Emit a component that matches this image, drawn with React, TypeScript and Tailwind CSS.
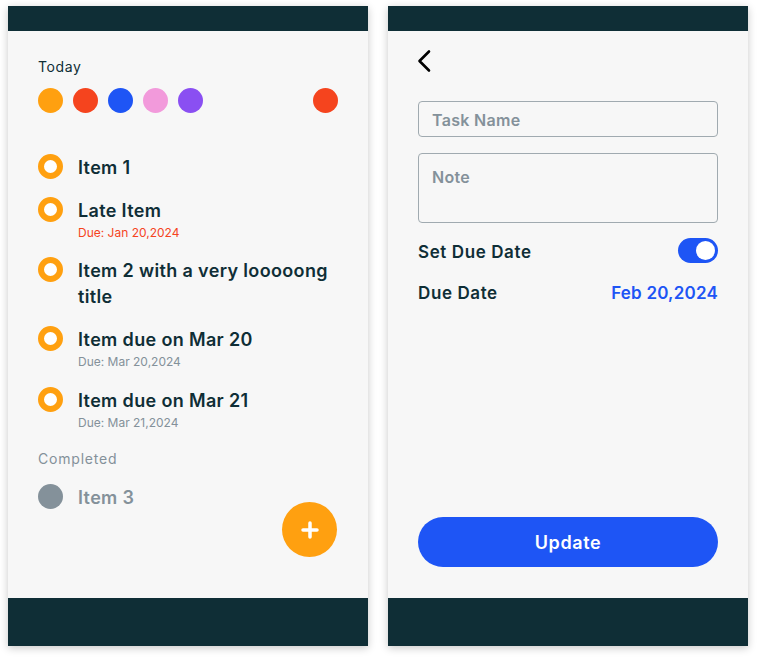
import React from 'react';

const ink = 'text-[#0f2e36]';

const colors = ['bg-[#ffa010]', 'bg-[#f5441e]', 'bg-[#1e55f5]', 'bg-[#f29adb]', 'bg-[#8a4ff2]'];

const tasks = [
  { title: 'Item 1' },
  { title: 'Late Item', due: 'Due: Jan 20,2024', late: true },
  { title: 'Item 2 with a very looooong title' },
  { title: 'Item due on Mar 20', due: 'Due: Mar 20,2024' },
  { title: 'Item due on Mar 21', due: 'Due: Mar 21,2024' },
];

const Phone = ({ children }: { children: React.ReactNode }) => (
  <div className="w-[360px] h-[640px] bg-[#f7f7f7] flex flex-col shadow-[0_2px_8px_rgba(0,0,0,0.22)]">
    <div className="h-[25px] bg-[#0f2e36]" />
    <div className="flex-1 relative flex flex-col">{children}</div>
    <div className="h-[48px] bg-[#0f2e36]" />
  </div>
);

const Ring = () => (
  <div className="w-[25px] h-[25px] shrink-0 rounded-full border-[6px] border-[#ffa010] bg-white" />
);

const ListScreen = () => (
  <Phone>
    <div className="px-[30px] pt-[26px]">
      <p className={`text-[14px] leading-[20px] tracking-[0.6px] ${ink}`}>Today</p>
      <div className="flex items-center gap-[10px] mt-[11px]">
        {colors.map((c) => (
          <span key={c} className={`w-[25px] h-[25px] rounded-full ${c}`} />
        ))}
        <span className="ml-auto w-[25px] h-[25px] rounded-full bg-[#f5441e]" />
      </div>

      <div className="mt-[41px] flex flex-col gap-[17px]">
        {tasks.map((t) => (
          <div key={t.title} className="flex gap-[15px] items-start">
            <Ring />
            <div className="flex-1">
              <p className={`relative top-[1px] text-[18px] leading-[26px] font-semibold tracking-[0.35px] ${ink}`}>
                {t.title}
              </p>
              {t.due && (
                <p
                  className={`relative top-[1px] text-[12px] ${t.late ? 'leading-[17px] text-[#f5441e]' : 'leading-[18px] text-[#84919a]'}`}
                >
                  {t.due}
                </p>
              )}
            </div>
          </div>
        ))}
      </div>

      <p className="mt-[18px] text-[14px] leading-[20px] tracking-[0.8px] text-[#84919a]">Completed</p>
      <div className="mt-[15px] flex gap-[15px] items-start">
        <span className="w-[25px] h-[25px] rounded-full bg-[#84919a]" />
        <p className="relative top-[1px] text-[18px] leading-[26px] font-semibold tracking-[0.35px] text-[#84919a]">
          Item 3
        </p>
      </div>
    </div>

    <button className="absolute right-[31px] bottom-[41px] w-[55px] h-[55px] rounded-full bg-[#ffa010] flex items-center justify-center">
      <svg width="18" height="18" viewBox="0 0 18 18">
        <path d="M9 2v14M2 9h14" stroke="white" strokeWidth="3.5" strokeLinecap="round" />
      </svg>
    </button>
  </Phone>
);

const EditScreen = () => (
  <Phone>
    <div className="px-[30px] flex-1 flex flex-col pb-[31px]">
      <svg className="mt-[18px] ml-[-1px]" width="16" height="24" viewBox="0 0 16 24">
        <path d="M12 2.5 2.5 12 12 21.5" fill="none" stroke="black" strokeWidth="2.6" strokeLinecap="round" strokeLinejoin="round" />
      </svg>

      <div className="mt-[28px] h-[36px] rounded-[4px] border border-[#a0aab0] px-[13px] pt-[2px] flex items-center">
        <span className="text-[16px] font-semibold tracking-[0.3px] text-[#84919a]">Task Name</span>
      </div>
      <div className="mt-[16px] h-[70px] rounded-[4px] border border-[#a0aab0] px-[13px] pt-[11px]">
        <span className="text-[16px] font-semibold tracking-[0.3px] text-[#84919a]">Note</span>
      </div>

      <div className="mt-[15px] flex items-center justify-between h-[25px]">
        <span className={`pt-[5px] text-[17px] font-semibold tracking-[0.6px] ${ink}`}>Set Due Date</span>
        <div className="w-[40px] h-[25px] rounded-full bg-[#1e55f5] flex items-center justify-end px-[3px]">
          <span className="w-[19px] h-[19px] rounded-full bg-white" />
        </div>
      </div>

      <div className="mt-[16px] flex items-center justify-between h-[26px] pt-[3px]">
        <span className={`text-[17px] font-semibold tracking-[0.6px] ${ink}`}>Due Date</span>
        <span className="text-[17px] font-semibold tracking-[0.2px] text-[#1e55f5]">Feb 20,2024</span>
      </div>

      <button className="mt-auto h-[50px] rounded-full bg-[#1e55f5] text-white text-[18px] font-semibold tracking-[0.6px]">
        Update
      </button>
    </div>
  </Phone>
);

export default function App() {
  return (
    <div className="min-h-screen bg-white pl-2 pt-[6px] flex gap-5 font-['Inter',sans-serif]">
      <ListScreen />
      <EditScreen />
    </div>
  );
}
